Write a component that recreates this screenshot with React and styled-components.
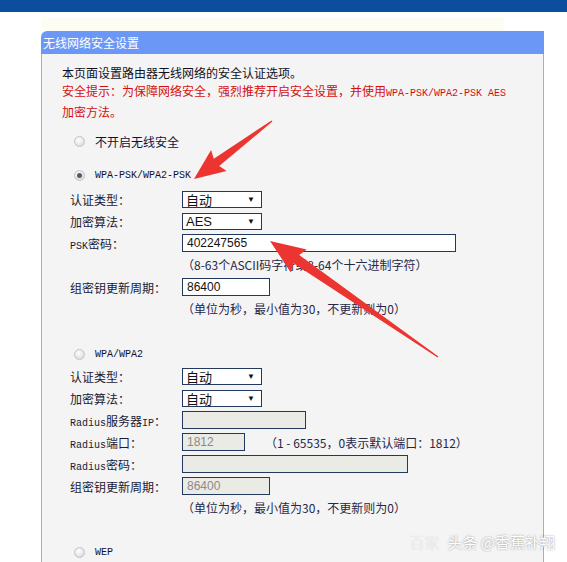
import React from "react";
import styled, { createGlobalStyle } from "styled-components";

const Global = createGlobalStyle`
  html, body { margin: 0; padding: 0; background: #ffffff; }
  body { width: 567px; height: 562px; overflow: hidden; position: relative; }
`;

const CJK = `"Noto Sans CJK SC", "Noto Sans", sans-serif`;
const MONO = `"Liberation Mono", "Noto Sans CJK SC", monospace`;

const TopBar = styled.div`
  height: 12px;
  background: #0b4e9e;
`;

const Panel = styled.div`
  margin: 5px 0 0 41px;
  width: 503px;
`;

const Band = styled.div`
  height: 14px;
  background: #fdfdf3;
  margin-right: 40px;
`;

const Header = styled.div`
  height: 23px;
  background: #6b98f7;
  border-top-left-radius: 6px;
  color: #ffffff;
  font: 12px/23px ${CJK};
  padding-left: 2px;
`;

const Body = styled.div`
  background: #f4f4f4;
  border-left: 1px solid #d8a56c;
  border-right: 1px solid #d8a56c;
  padding: 10px 0 40px 20px;
  color: #1c1c2e;
`;

const Intro = styled.p`
  margin: 0;
  font: 12px/18px ${CJK};
  color: ${(p) => (p.warn ? "#d40f0f" : "#111122")};
`;

const Latin = styled.span`
  font-family: ${MONO};
  font-size: 10px;
`;

const RadioRow = styled.div`
  display: flex;
  align-items: center;
  gap: 10px;
  height: 22px;
  margin-top: ${(p) => p.top}px;
  padding-left: 12px;
  font: 12px ${CJK};
  color: #111133;
`;

const Radio = styled.span`
  width: 11px;
  height: 11px;
  border-radius: 50%;
  border: 1px solid #c4c4c4;
  background: radial-gradient(circle at 40% 35%, #ffffff 0%, #e4e4e4 60%, #cfcfcf 100%);
  box-sizing: border-box;
  display: flex;
  align-items: center;
  justify-content: center;
  &::after {
    content: "";
    width: 5px;
    height: 5px;
    border-radius: 50%;
    background: ${(p) => (p.checked ? "#555a66" : "transparent")};
  }
`;

const Fields = styled.div`
  margin-top: ${(p) => p.top || 0}px;
`;

const Row = styled.div`
  display: flex;
  align-items: center;
  height: 22px;
  padding-left: 8px;
`;

const Label = styled.div`
  width: 112px;
  font: 12px ${CJK};
  color: #1a1a33;
  white-space: nowrap;
`;

const Select = styled.div`
  width: 80px;
  height: 17px;
  box-sizing: border-box;
  border: 1px solid #22385c;
  background: #ffffff;
  display: flex;
  align-items: center;
  justify-content: space-between;
  padding: 0 6px 0 3px;
  font: 13px "Liberation Sans", ${CJK};
  color: #111;
  &::after {
    content: "▼";
    font-size: 8px;
    color: #111;
  }
`;

const Input = styled.div`
  width: ${(p) => p.w}px;
  height: 18px;
  box-sizing: border-box;
  border: 1px solid #22385c;
  background: ${(p) => (p.disabled ? "#ebebe6" : "#ffffff")};
  color: ${(p) => (p.disabled ? "#8a8a8a" : "#111111")};
  padding-left: 4px;
  font: 12px/16px "Liberation Sans", sans-serif;
`;

const Hint = styled.div`
  height: 22px;
  padding-left: 120px;
  font: 12px/22px ${CJK};
  color: #26284a;
  white-space: nowrap;
`;

const InlineHint = styled.span`
  margin-left: 20px;
  font: 12px ${CJK};
  color: #26284a;
  white-space: nowrap;
`;

const Overlay = styled.svg`
  position: absolute;
  left: 0;
  top: 0;
  pointer-events: none;
`;

const Watermark = styled.div`
  position: absolute;
  right: 12px;
  top: 531px;
  font: 15px ${CJK};
  color: #ffffff;
  text-shadow: 0 0 2px rgba(0, 0, 0, 0.45);
  white-space: nowrap;
  span {
    color: rgba(255, 255, 255, 0.6);
    text-shadow: 0 0 1px rgba(0, 0, 0, 0.15);
    margin-right: 8px;
  }
`;

function arrow(tail, tip, headLen, headW, neckW, tailW) {
  const dx = tip[0] - tail[0];
  const dy = tip[1] - tail[1];
  const len = Math.hypot(dx, dy);
  const ux = dx / len;
  const uy = dy / len;
  const nx = -uy;
  const ny = ux;
  const bx = tip[0] - ux * headLen;
  const by = tip[1] - uy * headLen;
  const p = (x, y, k) => [x + nx * k, y + ny * k];
  const pts = [
    p(tail[0], tail[1], tailW / 2),
    p(bx, by, neckW / 2),
    p(bx - ux * 3, by - uy * 3, headW / 2),
    tip,
    p(bx - ux * 3, by - uy * 3, -headW / 2),
    p(bx, by, -neckW / 2),
    p(tail[0], tail[1], -tailW / 2),
  ];
  return pts.map((q) => q.map((v) => v.toFixed(1)).join(",")).join(" ");
}

const Arrows = () => (
  <Overlay width="567" height="562" viewBox="0 0 567 562">
    <polygon points={arrow([272, 121], [194, 179], 28, 26, 9, 1.5)} fill="#ec3431" />
    <polygon points={arrow([438, 357], [270, 241], 32, 28, 10, 1.5)} fill="#ec3431" />
  </Overlay>
);

const Field = ({ label, children }) => (
  <Row>
    <Label>{label}</Label>
    {children}
  </Row>
);

export default function App() {
  return (
    <>
      <Global />
      <TopBar />
      <Panel>
        <Band />
        <Header>无线网络安全设置</Header>
        <Body>
          <Intro>本页面设置路由器无线网络的安全认证选项。</Intro>
          <Intro warn>
            安全提示：为保障网络安全，强烈推荐开启安全设置，并使用<Latin>WPA-PSK/WPA2-PSK AES</Latin>
          </Intro>
          <Intro warn>加密方法。</Intro>

          <RadioRow top={9}>
            <Radio />
            不开启无线安全
          </RadioRow>

          <RadioRow top={12}>
            <Radio checked />
            <Latin>WPA-PSK/WPA2-PSK</Latin>
          </RadioRow>
          <Fields top={2}>
            <Field label="认证类型：">
              <Select>自动</Select>
            </Field>
            <Field label="加密算法：">
              <Select>AES</Select>
            </Field>
            <Field label={<><Latin>PSK</Latin>密码：</>}>
              <Input w={274}>402247565</Input>
            </Field>
            <Hint>（8-63个ASCII码字符或8-64个十六进制字符）</Hint>
            <Field label="组密钥更新周期：">
              <Input w={88}>86400</Input>
            </Field>
            <Hint>（单位为秒，最小值为30，不更新则为0）</Hint>
          </Fields>

          <RadioRow top={23}>
            <Radio />
            <Latin>WPA/WPA2</Latin>
          </RadioRow>
          <Fields>
            <Field label="认证类型：">
              <Select>自动</Select>
            </Field>
            <Field label="加密算法：">
              <Select>自动</Select>
            </Field>
            <Field label={<><Latin>Radius</Latin>服务器<Latin>IP</Latin>：</>}>
              <Input w={124} disabled />
            </Field>
            <Field label={<><Latin>Radius</Latin>端口：</>}>
              <Input w={63} disabled>1812</Input>
              <InlineHint>（1 - 65535，0表示默认端口：1812）</InlineHint>
            </Field>
            <Field label={<><Latin>Radius</Latin>密码：</>}>
              <Input w={226} disabled />
            </Field>
            <Field label="组密钥更新周期：">
              <Input w={88} disabled>86400</Input>
            </Field>
            <Hint>（单位为秒，最小值为30，不更新则为0）</Hint>
          </Fields>

          <RadioRow top={22}>
            <Radio />
            <Latin>WEP</Latin>
          </RadioRow>
        </Body>
      </Panel>
      <Arrows />
      <Watermark>
        <span>百家</span>头条 @香蕉补翔
      </Watermark>
    </>
  );
}
